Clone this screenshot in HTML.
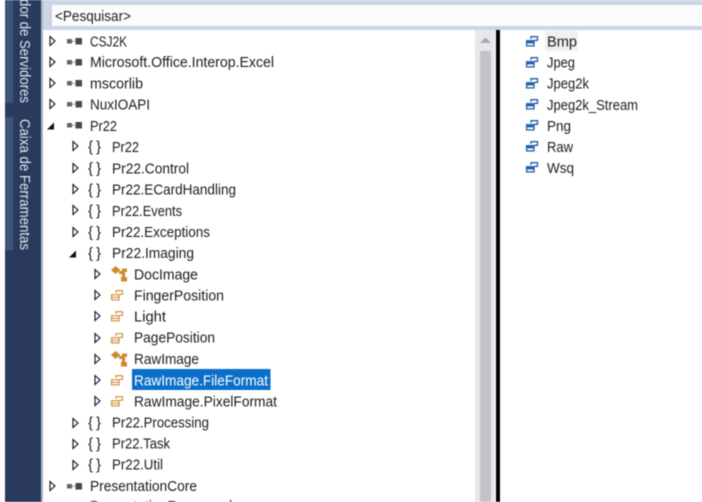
<!DOCTYPE html>
<html><head><meta charset="utf-8"><style>
html,body{margin:0;padding:0;background:#fff;width:702px;height:502px;overflow:hidden}
svg{display:block;position:absolute;left:0;top:0;filter:blur(.45px)}
text{font-family:"Liberation Sans",sans-serif;font-size:14.7px;fill:#1c1c1c}
</style></head><body>
<svg width="702" height="502" viewBox="0 0 702 502" xmlns="http://www.w3.org/2000/svg">
<defs>
<path id="o" d="M0 -4.500L5 0L0 4.500Z" fill="#fff" stroke="#111" stroke-width="1.100"/>
<path id="f" d="M5 -3.500V3.500H-2Z" fill="#111"/>
<g id="a"><rect x="0" y="-2" width="5" height="4.500" fill="#666"/><rect x="5" y="-.2" width="3" height="1" fill="#999"/><rect x="8.500" y="-3" width="6.500" height="6.500" fill="#484848"/></g>
<g id="e" fill="none" stroke-width="1.100"><rect x="0.600" y="-.3" width="7.400" height="5.200" fill="#fff"/><path d="M1 2.300H7.600" stroke-width="1"/><path d="M5 -2V-4.300H11.500V-.7H8.500"/></g>
<g id="eb" fill="none" stroke-width="1.300"><rect x="0.600" y="-.3" width="7.400" height="5.200" fill="#fff"/><path d="M1 1.300H7.600" stroke-width="2.200"/><path d="M5 -2V-4.300H11.500V-.7H8.500"/></g>
<g id="c" fill="#d08a2e"><path d="M0 -4L4.500 -8L9.500 -4L4.500 0Z"/><path d="M8 -3H14V4H11V0H8Z"/><rect x="10" y="3" width="6" height="4.500"/><rect x="11" y="-5.500" width="5" height="3.500"/></g>
</defs>
<rect x="0" y="0" width="702" height="502" fill="#fff"/>
<rect x="5" y="0" width="37" height="502" fill="#2a3a5c"/>
<rect x="5" y="0" width="8" height="103" fill="#3f5577"/>
<rect x="5" y="117" width="8" height="133" fill="#3f5577"/>
<rect x="41" y="0" width="2" height="502" fill="#a9b6cc"/>
<rect x="43" y="0" width="659" height="30" fill="#ccd5e6"/>
<rect x="52" y="5" width="650" height="21" fill="#fcfcfc"/>
<text x="55" y="21" textLength="76" lengthAdjust="spacingAndGlyphs">&lt;Pesquisar&gt;</text>
<g transform="translate(25 0) rotate(90)">
<text x="-1" y="5" textLength="104" lengthAdjust="spacingAndGlyphs" style="fill:#dfe6f0">dor de Servidores</text>
<text x="119" y="5" textLength="131" lengthAdjust="spacingAndGlyphs" style="fill:#dfe6f0">Caixa de Ferramentas</text>
</g>
<rect x="475" y="30" width="20" height="472" fill="#e8e8ec"/>
<rect x="480" y="51" width="11" height="451" fill="#c2c3c9"/>
<path d="M480 43L485.500 37.500L491 43Z" fill="#a8a9ae"/>
<rect x="496" y="30" width="4" height="472" fill="#000"/>
<rect x="132" y="369" width="138.500" height="21" fill="#0b6fc9"/>
<rect x="545" y="31" width="33" height="20" fill="#f0f0f0"/>

<use href="#o" x="50" y="41"/><use href="#a" x="67" y="41"/><text x="90" y="46.300" textLength="37" lengthAdjust="spacingAndGlyphs">CSJ2K</text>
<use href="#o" x="50" y="62"/><use href="#a" x="67" y="62"/><text x="90" y="67" textLength="184" lengthAdjust="spacingAndGlyphs">Microsoft.Office.Interop.Excel</text>
<use href="#o" x="50" y="83"/><use href="#a" x="67" y="83"/><text x="90" y="88.500" textLength="53" lengthAdjust="spacingAndGlyphs">mscorlib</text>
<use href="#o" x="50" y="104"/><use href="#a" x="67" y="104"/><text x="90" y="109.500" textLength="60" lengthAdjust="spacingAndGlyphs">NuxIOAPI</text>
<use href="#f" x="49" y="126"/><use href="#a" x="67" y="125"/><text x="90" y="131" textLength="27" lengthAdjust="spacingAndGlyphs">Pr22</text>

<use href="#o" x="73" y="146"/><text x="88" y="151.500" textLength="13" lengthAdjust="spacing">{ }</text><text x="112" y="152" textLength="27" lengthAdjust="spacingAndGlyphs">Pr22</text>
<use href="#o" x="73" y="168"/><text x="88" y="173" textLength="13" lengthAdjust="spacing">{ }</text><text x="112" y="173.300" textLength="77" lengthAdjust="spacingAndGlyphs">Pr22.Control</text>
<use href="#o" x="73" y="189"/><text x="88" y="194.500" textLength="13" lengthAdjust="spacing">{ }</text><text x="112" y="194.600" textLength="124" lengthAdjust="spacingAndGlyphs">Pr22.ECardHandling</text>
<use href="#o" x="73" y="210"/><text x="88" y="215.500" textLength="13" lengthAdjust="spacing">{ }</text><text x="112" y="216" textLength="70" lengthAdjust="spacingAndGlyphs">Pr22.Events</text>
<use href="#o" x="73" y="232"/><text x="88" y="237" textLength="13" lengthAdjust="spacing">{ }</text><text x="112" y="237" textLength="98" lengthAdjust="spacingAndGlyphs">Pr22.Exceptions</text>
<use href="#f" x="71" y="254"/><text x="88" y="258" textLength="13" lengthAdjust="spacing">{ }</text><text x="112" y="258" textLength="82" lengthAdjust="spacingAndGlyphs">Pr22.Imaging</text>

<use href="#o" x="95" y="274"/><use href="#c" x="111" y="274"/><text x="134" y="279.600" textLength="64" lengthAdjust="spacingAndGlyphs">DocImage</text>
<use href="#o" x="95" y="295"/><use href="#e" x="111" y="295" stroke="#d08a2e"/><text x="134" y="300.600" textLength="90" lengthAdjust="spacingAndGlyphs">FingerPosition</text>
<use href="#o" x="95" y="316"/><use href="#e" x="111" y="316" stroke="#d08a2e"/><text x="134" y="321.500" textLength="32" lengthAdjust="spacingAndGlyphs">Light</text>
<use href="#o" x="95" y="338"/><use href="#e" x="111" y="338" stroke="#d08a2e"/><text x="134" y="342.600" textLength="81" lengthAdjust="spacingAndGlyphs">PagePosition</text>
<use href="#o" x="95" y="359"/><use href="#c" x="111" y="359"/><text x="134" y="364" textLength="65" lengthAdjust="spacingAndGlyphs">RawImage</text>
<use href="#o" x="95" y="380"/><use href="#e" x="111" y="380" stroke="#d08a2e"/><text x="134" y="385.300" textLength="134" lengthAdjust="spacingAndGlyphs" style="fill:#fff">RawImage.FileFormat</text>
<use href="#o" x="95" y="401"/><use href="#e" x="111" y="401" stroke="#d08a2e"/><text x="134" y="406.300" textLength="143" lengthAdjust="spacingAndGlyphs">RawImage.PixelFormat</text>

<use href="#o" x="73" y="423"/><text x="88" y="427.500" textLength="13" lengthAdjust="spacing">{ }</text><text x="112" y="427.600" textLength="97" lengthAdjust="spacingAndGlyphs">Pr22.Processing</text>
<use href="#o" x="73" y="444"/><text x="88" y="448.500" textLength="13" lengthAdjust="spacing">{ }</text><text x="112" y="448.600" textLength="58" lengthAdjust="spacingAndGlyphs">Pr22.Task</text>
<use href="#o" x="73" y="465"/><text x="88" y="469.500" textLength="13" lengthAdjust="spacing">{ }</text><text x="112" y="469.600" textLength="51" lengthAdjust="spacingAndGlyphs">Pr22.Util</text>
<use href="#o" x="50" y="486"/><use href="#a" x="67" y="486"/><text x="90" y="491" textLength="107" lengthAdjust="spacingAndGlyphs">PresentationCore</text>
<text x="90" y="511" textLength="146" lengthAdjust="spacingAndGlyphs">PresentationFramework</text>

<use href="#eb" x="526" y="41" stroke="#1c5fa8"/><text x="547" y="46.300" textLength="30" lengthAdjust="spacingAndGlyphs">Bmp</text>
<use href="#eb" x="526" y="62" stroke="#1c5fa8"/><text x="547" y="67.300" textLength="28" lengthAdjust="spacingAndGlyphs">Jpeg</text>
<use href="#eb" x="526" y="83" stroke="#1c5fa8"/><text x="547" y="88.700" textLength="42" lengthAdjust="spacingAndGlyphs">Jpeg2k</text>
<use href="#eb" x="526" y="104" stroke="#1c5fa8"/><text x="547" y="110" textLength="91" lengthAdjust="spacingAndGlyphs">Jpeg2k_Stream</text>
<use href="#eb" x="526" y="125" stroke="#1c5fa8"/><text x="547" y="131" textLength="24" lengthAdjust="spacingAndGlyphs">Png</text>
<use href="#eb" x="526" y="146" stroke="#1c5fa8"/><text x="547" y="152" textLength="26" lengthAdjust="spacingAndGlyphs">Raw</text>
<use href="#eb" x="526" y="167" stroke="#1c5fa8"/><text x="547" y="173" textLength="27" lengthAdjust="spacingAndGlyphs">Wsq</text>
</svg>
</body></html>
